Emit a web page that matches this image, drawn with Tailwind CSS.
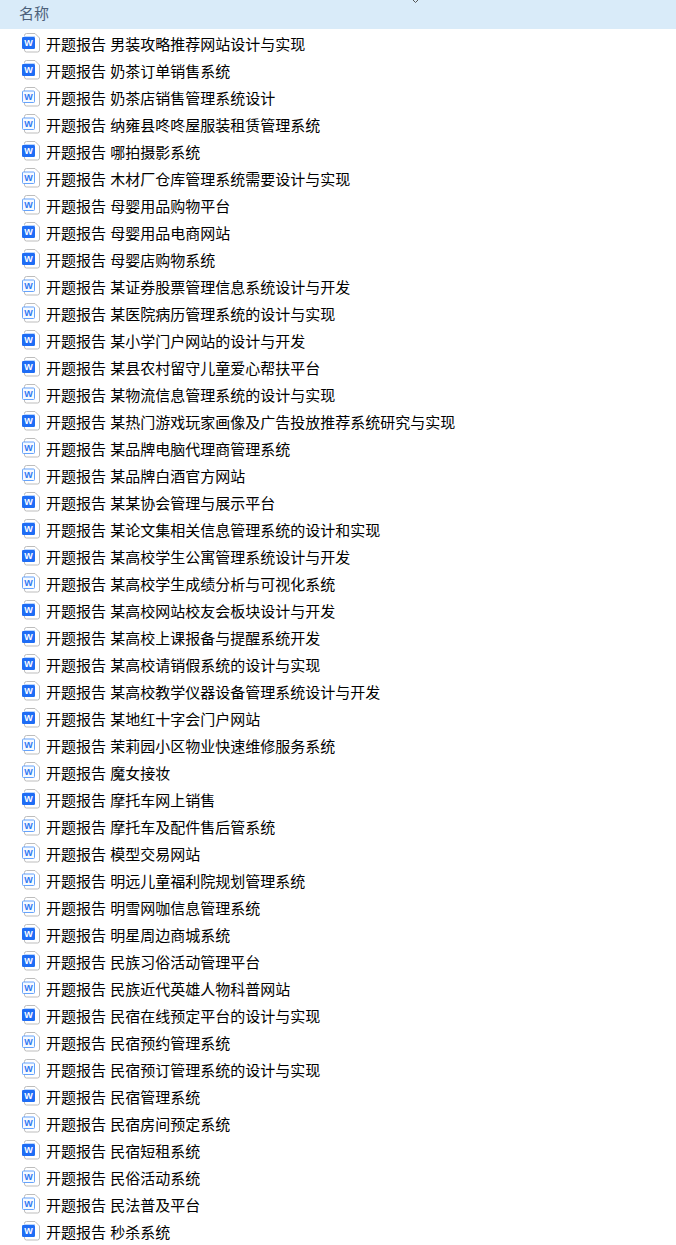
<!DOCTYPE html>
<html lang="zh-CN">
<head>
    <meta charset="UTF-8">
    <meta name="viewport" content="width=device-width, initial-scale=1.0">
    <title>开题报告</title>
    <script src="https://cdn.jsdelivr.net/npm/@tailwindcss/browser@4"></script>
</head>
<body class="bg-white font-['Liberation_Sans','Noto_Sans_CJK_SC',sans-serif] text-[15px] text-black">
    <!-- Icon sprites -->
    <svg class="hidden" aria-hidden="true">
        <symbol id="icon-doc" viewBox="0 0 18 20">
            <path d="M2.5 4V2.5Q2.5 .5 4.5 .5H13L17.5 5V17Q17.5 19 15.5 19H4.5Q2.5 19 2.5 17V4" fill="#fff" stroke="#bdbdbd"/>
            <rect x="0" y="4" width="13" height="12" rx="1.2" fill="#1f6df5"/>
            <rect x="2" y="3" width="11" height="1" fill="#bcd6fd"/>
            <text x="6.5" y="13" text-anchor="middle" font-size="9" font-weight="700" fill="#fff">W</text>
        </symbol>
        <symbol id="icon-docx" viewBox="0 0 18 20">
            <path d="M2.5 4V2.5Q2.5 .5 4.5 .5H13L17.5 5V17Q17.5 19 15.5 19H4.5Q2.5 19 2.5 17V4" fill="#fff" stroke="#bdbdbd"/>
            <rect x=".5" y="4" width="12" height="11.5" rx="1" fill="#f6faff" stroke="#66a3fb"/>
            <text x="6.5" y="13" text-anchor="middle" font-size="9" font-weight="700" fill="#2f78f3">W</text>
        </symbol>
    </svg>

    <!-- File list -->
    <table class="w-full border-collapse">
        <thead>
            <tr class="bg-[#d9ebf9]">
                <th scope="col" class="relative h-[29px] p-0 pl-[19px] text-left font-normal leading-[27px] text-[#4c607a] align-top">
                    名称
                    <svg class="absolute left-[411px] top-0 h-1 w-2" viewBox="0 0 8 4" fill="none" stroke="#555" aria-hidden="true">
                        <path d="M1.5 -.5L4.5 2.5L7.5 -.5"/>
                    </svg>
                </th>
            </tr>
        </thead>
        <tbody id="file-list"></tbody>
    </table>

    <script>
        const files = [
            ['doc', '男装攻略推荐网站设计与实现'],
            ['doc', '奶茶订单销售系统'],
            ['docx', '奶茶店销售管理系统设计'],
            ['docx', '纳雍县咚咚屋服装租赁管理系统'],
            ['doc', '哪拍摄影系统'],
            ['docx', '木材厂仓库管理系统需要设计与实现'],
            ['docx', '母婴用品购物平台'],
            ['doc', '母婴用品电商网站'],
            ['doc', '母婴店购物系统'],
            ['docx', '某证券股票管理信息系统设计与开发'],
            ['docx', '某医院病历管理系统的设计与实现'],
            ['doc', '某小学门户网站的设计与开发'],
            ['doc', '某县农村留守儿童爱心帮扶平台'],
            ['docx', '某物流信息管理系统的设计与实现'],
            ['doc', '某热门游戏玩家画像及广告投放推荐系统研究与实现'],
            ['docx', '某品牌电脑代理商管理系统'],
            ['docx', '某品牌白酒官方网站'],
            ['doc', '某某协会管理与展示平台'],
            ['doc', '某论文集相关信息管理系统的设计和实现'],
            ['doc', '某高校学生公寓管理系统设计与开发'],
            ['docx', '某高校学生成绩分析与可视化系统'],
            ['doc', '某高校网站校友会板块设计与开发'],
            ['doc', '某高校上课报备与提醒系统开发'],
            ['doc', '某高校请销假系统的设计与实现'],
            ['doc', '某高校教学仪器设备管理系统设计与开发'],
            ['doc', '某地红十字会门户网站'],
            ['docx', '茉莉园小区物业快速维修服务系统'],
            ['docx', '魔女接妆'],
            ['doc', '摩托车网上销售'],
            ['docx', '摩托车及配件售后管系统'],
            ['docx', '模型交易网站'],
            ['docx', '明远儿童福利院规划管理系统'],
            ['docx', '明雪网咖信息管理系统'],
            ['doc', '明星周边商城系统'],
            ['doc', '民族习俗活动管理平台'],
            ['docx', '民族近代英雄人物科普网站'],
            ['doc', '民宿在线预定平台的设计与实现'],
            ['docx', '民宿预约管理系统'],
            ['docx', '民宿预订管理系统的设计与实现'],
            ['doc', '民宿管理系统'],
            ['docx', '民宿房间预定系统'],
            ['doc', '民宿短租系统'],
            ['docx', '民俗活动系统'],
            ['docx', '民法普及平台'],
            ['doc', '秒杀系统']
        ];

        document.getElementById('file-list').innerHTML = files.map(([type, name]) => `
            <tr>
                <td class="p-0">
                    <div class="flex h-[27px] items-start gap-1.5 pl-[22px] pt-1">
                        <svg class="h-5 w-[18px] shrink-0" aria-hidden="true"><use href="#icon-${type}"/></svg>
                        <span class="whitespace-nowrap leading-[23px]">开题报告 ${name}</span>
                    </div>
                </td>
            </tr>`).join('');
    </script>
</body>
</html>
